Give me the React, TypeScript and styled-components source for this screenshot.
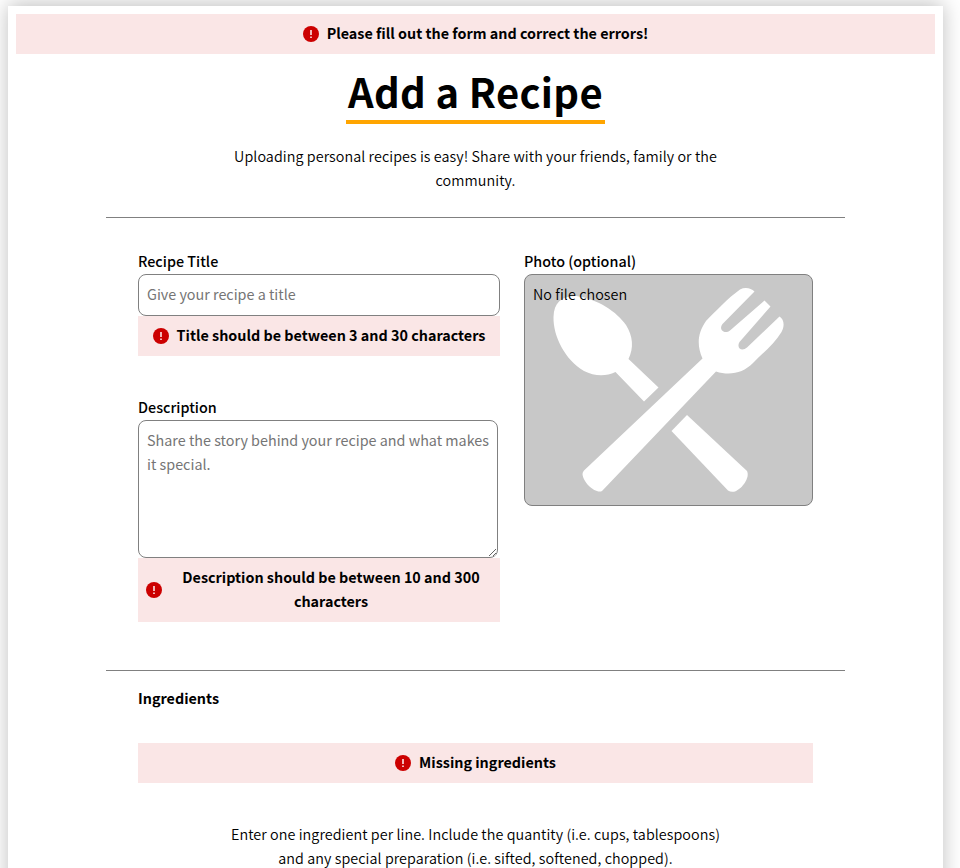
import React from "react";
import styled, { createGlobalStyle } from "styled-components";

const GlobalStyle = createGlobalStyle`
  * { box-sizing: border-box; }
  html, body { margin: 0; background: #fff; overflow: hidden; height: 868px; }
  body, input, textarea {
    font-family: "Noto Sans CJK JP", "Noto Sans CJK SC", "Noto Sans", sans-serif;
    font-size: 14.35px;
    line-height: 24px;
    color: #000;
  }
`;

const Page = styled.div`
  display: flow-root;
  height: 868px;
  overflow: hidden;
`;

const Card = styled.main`
  margin: 6px 17px 0 8px;
  padding: 8px;
  min-height: 900px;
  background: #fff;
  box-shadow: 0 -2px 20px rgba(0, 0, 0, 0.26);
`;

const Form = styled.form`
  display: flex;
  flex-direction: column;
  width: 739px;
  margin: 0 auto;
`;

const Alert = styled.div`
  display: flex;
  align-items: center;
  justify-content: center;
  gap: 8px;
  padding: 8px;
  background: #fae6e6;
  font-weight: 700;
  text-align: center;
  svg { flex: none; display: block; }
`;

const AlertText = styled.span<{ $fill?: boolean }>`
  flex: ${(p) => (p.$fill ? "1" : "none")};
  margin: -1px 0 1px;
  white-space: ${(p) => (p.$fill ? "normal" : "nowrap")};
`;

const Title = styled.h1`
  align-self: center;
  width: 259px;
  height: 58px;
  margin: 12px 0 0;
  border-bottom: 4px solid orange;
  font-size: 40px;
  letter-spacing: 0.3px;
  line-height: 51px;
  font-weight: 700;
  text-align: center;
  white-space: nowrap;
`;

const Blurb = styled.p<{ $top: number; $bottom: number }>`
  align-self: center;
  width: 500px;
  margin: ${(p) => p.$top}px 0 ${(p) => p.$bottom}px;
  font-weight: 350;
  letter-spacing: 0.065px;
  text-align: center;
`;

const Columns = styled.section`
  display: grid;
  grid-template-columns: 362px 289px;
  column-gap: 24px;
  height: 454px;
  padding: 31px 32px;
  border: solid gray;
  border-width: 1px 0;
`;

const Field = styled.div`
  display: flex;
  flex-direction: column;
  & + & { margin-top: 39px; }
`;

const Label = styled.label`
  font-weight: 500;
  height: 25px;
`;

const TextInput = styled.input`
  width: 100%;
  height: 42px;
  padding: 6px 8px 10px;
  border: 1px solid gray;
  border-radius: 8px;
  font-weight: 400;
`;

const TextArea = styled.textarea`
  width: 360px;
  height: 138px;
  padding: 7px 8px 8px;
  border: 1px solid gray;
  border-radius: 8px;
  font-weight: 400;
`;

const Photo = styled.div`
  display: grid;
  height: 232px;
  border: 1px solid gray;
  border-radius: 8px;
  background: #c8c8c8;
  overflow: hidden;
  & > * { grid-area: 1 / 1; }
`;

const PhotoText = styled.span`
  padding: 7px 8px;
  font-weight: 350;
  letter-spacing: 0.065px;
`;

const Ingredients = styled.section`
  display: flex;
  flex-direction: column;
  padding: 15px 32px;
`;

const SectionTitle = styled.h2`
  margin: 0 0 33px;
  font-size: 14.35px;
  line-height: 24px;
  font-weight: 700;
`;

const ErrorIcon = () => (
  <svg width="16" height="16" viewBox="0 0 16 16">
    <circle cx="8" cy="8" r="8" fill="#c00" />
    <path d="M7.2 4h1.6v5H7.2zM7.2 10.4h1.6V12H7.2z" fill="#fae6e6" />
  </svg>
);

const Utensils = () => (
  <svg width="287" height="230" viewBox="525 275 287 230" fill="#fff">
    <path d="M553.500 317C554 303 561 296 576 296C598 299 617 312 626 325C633 336 634 348 628.500 359L658.500 387.500L644 401.500L615.500 372C605 377 594 376 584 371C565 360 553 336 553.500 317Z" />
    <path d="M687 415L747 471C750 477 743 488 735 491.500Q731 492.500 728 490.500L671.500 431Z" />
    <path d="M754.500 291.500L722.500 324C718 330 725 334.500 730 330.500L764.500 300.500L770.500 306.500L739.500 342C736 348 742 352 747 347.500L779.500 316.500C784 319 785 326 781.500 332C775 343 763 353 753 363C743 373 730 376 716 371.500L602 491C596 494 583 483 582.500 474Q582.500 472 584 470.500L702.500 358.500C697 346 697 334 706 321C716 311 728 298 740 289.500C745 287 751 288 754.500 291.500Z" />
  </svg>
);

export default function App() {
  return (
    <Page>
      <GlobalStyle />
      <Card>
        <Alert>
          <ErrorIcon />
          <AlertText>Please fill out the form and correct the errors!</AlertText>
        </Alert>
        <Form noValidate>
          <Title>Add a Recipe</Title>
          <Blurb $top={20} $bottom={25}>
            Uploading personal recipes is easy! Share with your friends, family or the community.
          </Blurb>
          <Columns>
            <div>
              <Field>
                <Label htmlFor="title">Recipe Title</Label>
                <TextInput id="title" placeholder="Give your recipe a title" />
                <Alert>
                  <ErrorIcon />
                  <AlertText>Title should be between 3 and 30 characters</AlertText>
                </Alert>
              </Field>
              <Field>
                <Label htmlFor="description">Description</Label>
                <TextArea
                  id="description"
                  placeholder="Share the story behind your recipe and what makes it special."
                />
                <Alert>
                  <ErrorIcon />
                  <AlertText $fill>Description should be between 10 and 300 characters</AlertText>
                </Alert>
              </Field>
            </div>
            <Field>
              <Label>Photo (optional)</Label>
              <Photo>
                <Utensils />
                <PhotoText>No file chosen</PhotoText>
              </Photo>
            </Field>
          </Columns>
          <Ingredients>
            <SectionTitle>Ingredients</SectionTitle>
            <Alert>
              <ErrorIcon />
              <AlertText>Missing ingredients</AlertText>
            </Alert>
            <Blurb $top={39} $bottom={0}>
              Enter one ingredient per line. Include the quantity (i.e. cups, tablespoons) and any
              special preparation (i.e. sifted, softened, chopped).
            </Blurb>
          </Ingredients>
        </Form>
      </Card>
    </Page>
  );
}
